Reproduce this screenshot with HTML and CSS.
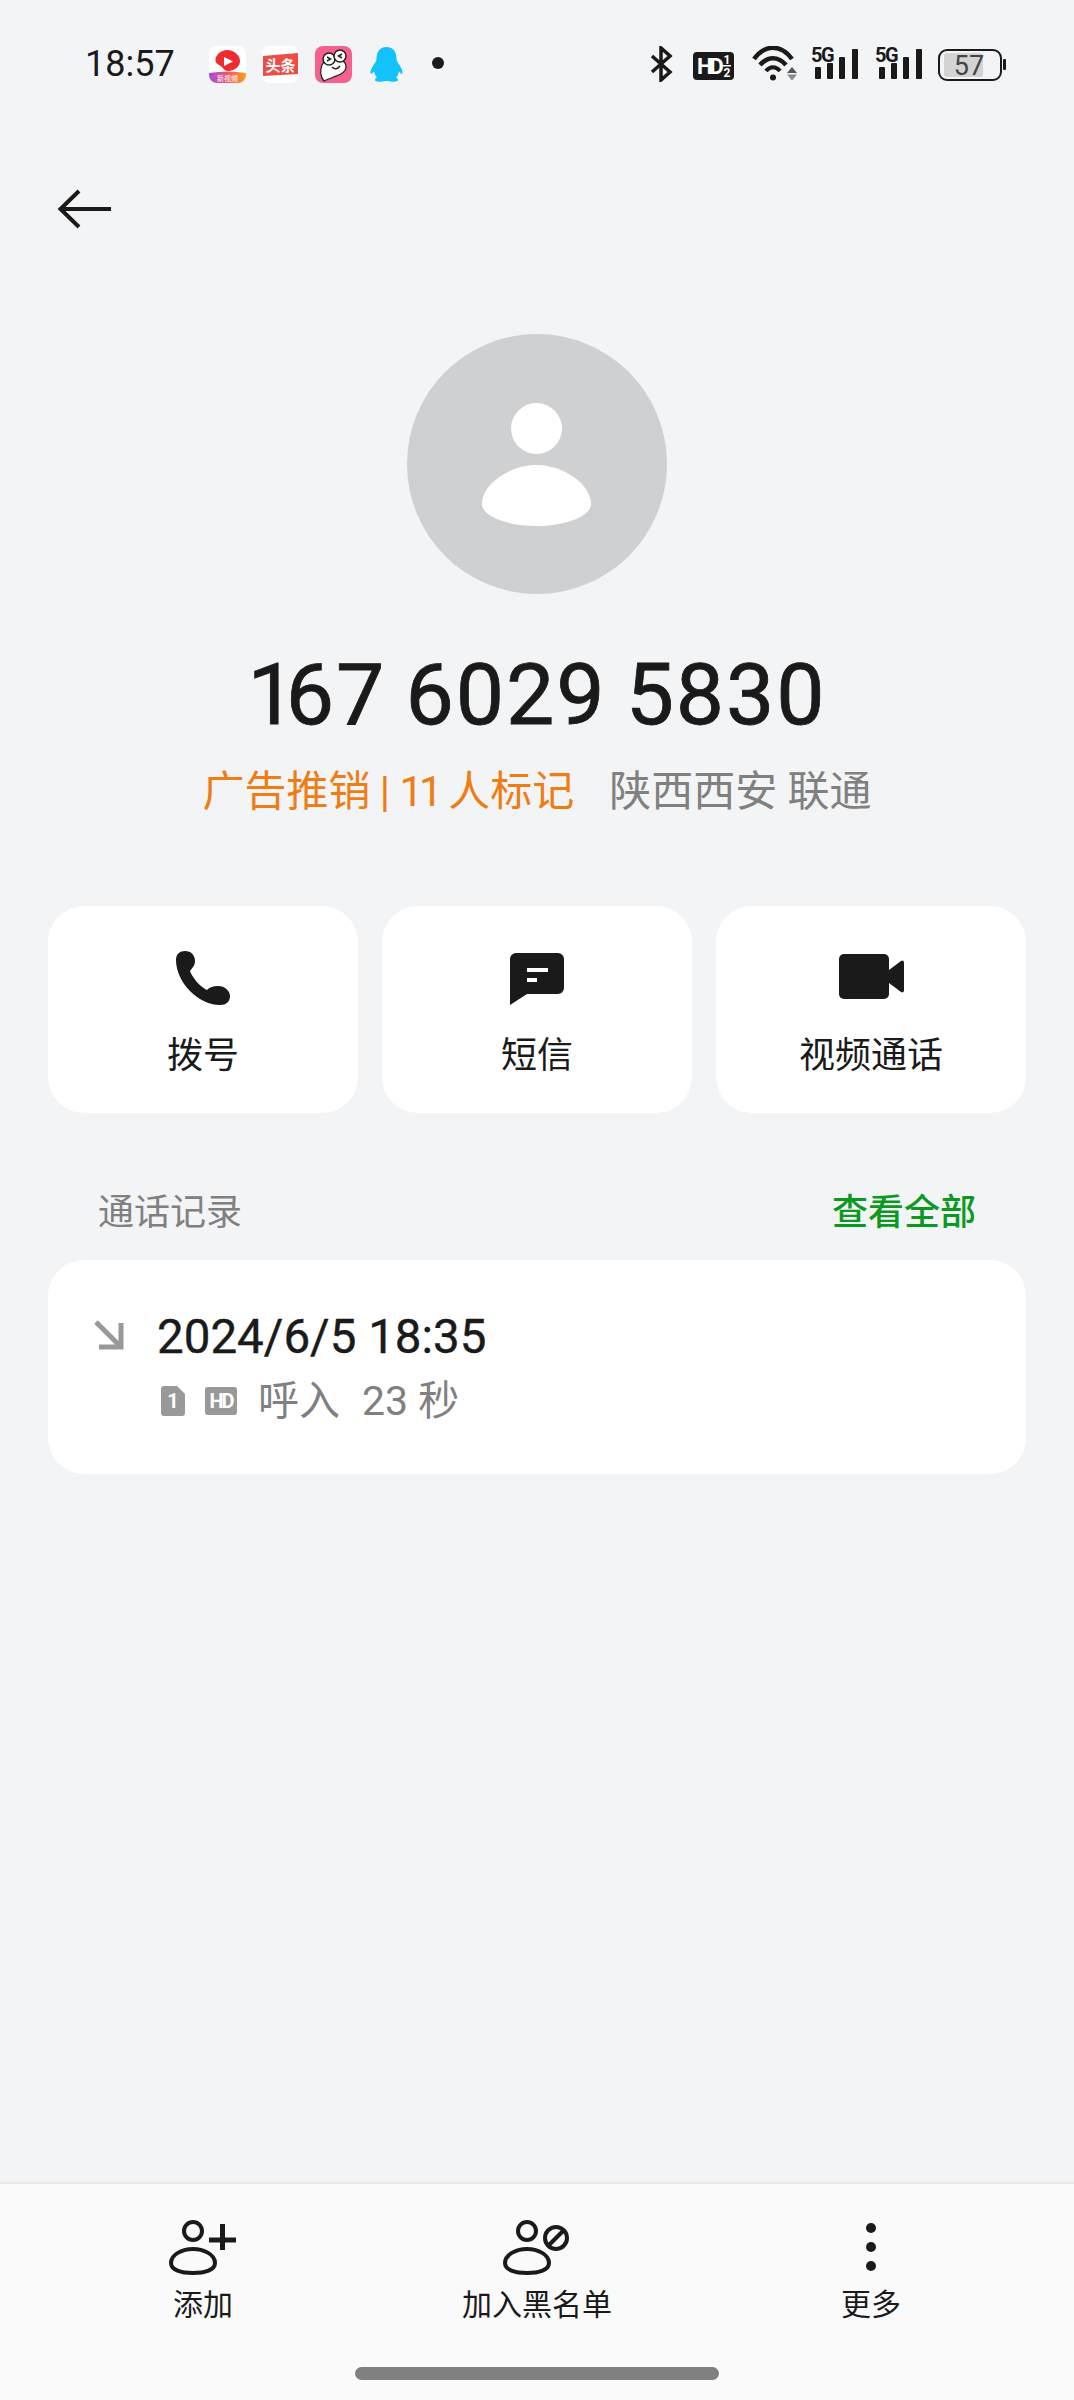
FILE: index.html
```html
<!DOCTYPE html>
<html lang="zh-CN">
<head>
  <meta charset="UTF-8" />
  <meta name="viewport" content="width=device-width, initial-scale=1.0"/>
  <title>通话详情</title>
  <link rel="stylesheet" href="styles.css">
</head>

<body>
  <div class="screen">
    <div class="status">
      <div class="status-left">
        <span class="time">18:57</span>
        <svg class="app" viewBox="0 0 37 37">
          <defs>
            <linearGradient id="band" x1="0" x2="1" y1="0" y2="0">
              <stop offset="0" stop-color="#a14de0"/>
              <stop offset="0.5" stop-color="#f0566a"/>
              <stop offset="1" stop-color="#f9a21f"/>
            </linearGradient>
          </defs>
          <rect width="37" height="37" rx="8" fill="#fff"/>
          <path d="M0 27 Q18 24 37 27 V29 A8 8 0 0 1 29 37 H8 A8 8 0 0 1 0 29 Z" fill="url(#band)"/>
          <path d="M18 4 C26 4 31 10 31 15 C31 20 27 24 20 25 C17 25.500 15 24 13 21 C11 19 7 18 6.500 15 C6 9 12 4 18 4 Z" fill="#ee2b2f"/>
          <path d="M15 11 L24 15.500 L15 20 Z" fill="#fff"/>
          <text x="18.500" y="34.500" class="app-tiny">新视频</text>
        </svg>
        <svg class="app" viewBox="0 0 37 37">
          <rect width="37" height="37" rx="8" fill="#fff"/>
          <path d="M1 10 L36 7 V28 L1 30 Z" fill="#ee4c44"/>
          <text x="18.500" y="25" class="app-label">头条</text>
        </svg>
        <svg class="app" viewBox="0 0 37 37">
          <rect width="37" height="37" rx="8" fill="#f6608f"/>
          <path d="M7 19 C9 14 14 13 20 13 C27 13 31 16 31 21 C31 28 20 30 9 35 C5 31 5 24 7 19 Z" fill="#fff" stroke="#222" stroke-width="1.200"/>
          <circle cx="14" cy="13" r="6" fill="#fff" stroke="#222" stroke-width="1.500"/>
          <circle cx="25" cy="10" r="6" fill="#fff" stroke="#222" stroke-width="1.500"/>
          <path d="M12 11 L15.500 13 L12 15 M27 8 L23.500 10 L27 12" fill="none" stroke="#222" stroke-width="1.500"/>
          <path d="M17 21 Q21 25 25 20" fill="none" stroke="#222" stroke-width="1.500"/>
        </svg>
        <svg class="app" viewBox="0 0 37 37">
          <path d="M18.500 1 C26 1 28.500 7 28.500 13 C28.500 15 30 17 31.500 19 C33.500 22 35 26 34.500 27.500 C33.500 28 32 27 31 25.500 C30.500 28 29.500 30 28 31.500 C30 32.500 30.500 34 29.500 35 C27 36.500 22 35.500 19.500 35 H17.500 C15 35.500 10 36.500 7.500 35 C6.500 34 7 32.500 9 31.500 C7.500 30 6.500 28 6 25.500 C5 27 3.500 28 2.500 27.500 C2 26 3.500 22 5.500 19 C7 17 8.500 15 8.500 13 C8.500 7 11 1 18.500 1 Z" fill="#12c3fb"/>
        </svg>
        <span class="dot"></span>
      </div>
      <div class="status-right">
        <svg class="ic-bt" viewBox="0 0 25 36">
          <path d="M2 10 L20 26 L11 34 V2 L20 10 L2 26" fill="none" stroke="#1a1a1a" stroke-width="3.500"/>
        </svg>
        <svg class="ic-hd" viewBox="0 0 46 36">
          <rect x="5" y="6" width="41" height="28" rx="4" fill="#1a1a1a"/>
          <text x="9" y="28" class="hd-big">HD</text>
          <text x="39" y="18" class="hd-small">1</text>
          <text x="39" y="31" class="hd-small">2</text>
          <rect x="35" y="19" width="8" height="1.500" fill="#fff"/>
        </svg>
        <svg class="ic-wifi" viewBox="0 0 51 36">
          <path d="M7 13 C18 -2 34 -2 45 13" fill="none" stroke="#1a1a1a" stroke-width="4.500"/>
          <path d="M13 19 C21 10 31 10 39 19" fill="none" stroke="#1a1a1a" stroke-width="4.500"/>
          <path d="M19 25 C23 20 29 20 33 25" fill="none" stroke="#1a1a1a" stroke-width="4"/>
          <circle cx="26" cy="31.500" r="3" fill="#1a1a1a"/>
          <path d="M40 27 L45 21 L50 27 Z" fill="#555"/>
          <path d="M40 28.500 H50 L45 34.500 Z" fill="#888"/>
        </svg>
        <svg class="ic-sig" viewBox="0 0 47 36">
          <text x="0" y="16" class="sig-text">5G</text>
          <rect x="4" y="21" width="6" height="12" rx="1" fill="#1a1a1a"/>
          <rect x="16" y="17" width="6" height="16" rx="1" fill="#1a1a1a"/>
          <rect x="28" y="11" width="6" height="22" rx="1" fill="#1a1a1a"/>
          <rect x="41" y="3" width="6" height="30" rx="1" fill="#1a1a1a"/>
        </svg>
        <svg class="ic-sig2" viewBox="0 0 51 36">
          <text x="4" y="16" class="sig-text">5G</text>
          <rect x="8" y="21" width="6" height="12" rx="1" fill="#1a1a1a"/>
          <rect x="20" y="17" width="6" height="16" rx="1" fill="#1a1a1a"/>
          <rect x="32" y="11" width="6" height="22" rx="1" fill="#1a1a1a"/>
          <rect x="45" y="3" width="6" height="30" rx="1" fill="#1a1a1a"/>
        </svg>
        <svg class="ic-bat" viewBox="0 0 71 36">
          <rect x="4" y="4" width="62" height="30" rx="8" fill="none" stroke="#1a1a1a" stroke-width="2"/>
          <rect x="9" y="7" width="39" height="24" rx="3" fill="#d3d3d3"/>
          <rect x="68" y="13" width="3" height="11" rx="1" fill="#1a1a1a"/>
          <text x="34" y="29" class="bat-text">57</text>
        </svg>
      </div>
    </div>

    <div class="topbar">
      <svg class="back" viewBox="0 0 56 42">
        <path d="M54 21 H4 M22 3 L3.500 21 L22 39" fill="none" stroke="#1a1a1a" stroke-width="4"/>
      </svg>
    </div>

    <div class="contact">
      <div class="avatar">
        <svg viewBox="1 0 260 260" width="260" height="260">
          <circle cx="130.500" cy="94.500" r="25.500" fill="#fff"/>
          <path d="M76 170 C76 150 104 131 130.500 131 C157 131 185 150 185 170 C185 182 160 192 130.500 192 C101 192 76 182 76 170 Z" fill="#fff"/>
        </svg>
      </div>
      <h1 class="number"><span class="one">1</span>67 6029 5830</h1>
      <p class="meta"><span class="tag">广告推销 | <span class="eleven">11</span> 人标记</span><span class="place">陕西西安 联通</span></p>
    </div>

    <div class="actions">
      <div class="action">
        <svg class="action-icon" viewBox="3 -2 80 80">
          <path d="M16 20 C16 14 20 11 25 11 C31 11 35 15 35 21 C35 26 32 28 30 31 C32 37 40 47 47 50 C50 47 53 46 58 46 C65 46 70 51 70 56 C70 62 66 65 60 65 C38 65 16 42 16 20 Z" fill="#1a1a1a"/>
        </svg>
        <span>拨号</span>
      </div>
      <div class="action">
        <svg class="action-icon" viewBox="6 -1 80 80">
          <path d="M19 20 A6 6 0 0 1 25 14 H67 A6 6 0 0 1 73 20 V49 A6 6 0 0 1 67 55 H36 L19 66 Z" fill="#1a1a1a"/>
          <rect x="36" y="29" width="21" height="4" fill="#fff"/>
          <rect x="36" y="39" width="10" height="4" fill="#fff"/>
        </svg>
        <span>短信</span>
      </div>
      <div class="action">
        <svg class="action-icon" viewBox="-1 0 80 80">
          <rect x="7" y="16" width="50" height="45" rx="5" fill="#1a1a1a"/>
          <path d="M57 32 L69 23 Q72 21.500 72 25 V52 Q72 55.500 69 54 L57 45 Z" fill="#1a1a1a"/>
        </svg>
        <span>视频通话</span>
      </div>
    </div>

    <div class="section-head">
      <span class="section-title">通话记录</span>
      <span class="section-link">查看全部</span>
    </div>

    <div class="call">
      <svg class="call-arrow" viewBox="0 0 34 34">
        <path d="M4 3 L27 26 M29 4 V28 H7" fill="none" stroke="#999" stroke-width="5"/>
      </svg>
      <div class="call-info">
        <div class="call-date">2024/6/5 18:35</div>
        <div class="call-sub">
          <svg class="sim" viewBox="0 0 24 30">
            <path d="M3 0 H16 L24 8 V27 A3 3 0 0 1 21 30 H3 A3 3 0 0 1 0 27 V3 A3 3 0 0 1 3 0 Z" fill="#999"/>
            <text x="12" y="22" class="badge-text">1</text>
          </svg>
          <svg class="hd" viewBox="0 0 32 28">
            <rect width="32" height="28" rx="3" fill="#999"/>
            <text x="16" y="21" class="badge-text badge-hd">HD</text>
          </svg>
          <span class="call-text">呼入</span>
          <span class="call-text">23 秒</span>
        </div>
      </div>
    </div>

    <div class="bottom">
      <div class="tabs">
        <div class="tab">
          <svg class="tab-icon" viewBox="-1 0 90 60">
            <circle cx="34" cy="15" r="9" fill="none" stroke="#1a1a1a" stroke-width="4"/>
            <path d="M12 47 C12 38 24 33 34 33 C44 33 56 38 56 47 C56 54 46 57 34 57 C22 57 12 54 12 47 Z" fill="none" stroke="#1a1a1a" stroke-width="4"/>
            <path d="M50 24 H77 M63.500 8 V34" fill="none" stroke="#1a1a1a" stroke-width="5"/>
          </svg>
          <span>添加</span>
        </div>
        <div class="tab">
          <svg class="tab-icon" viewBox="-2 0 90 60">
            <circle cx="33" cy="15" r="9" fill="none" stroke="#1a1a1a" stroke-width="4"/>
            <path d="M11 47 C11 38 23 33 33 33 C43 33 55 38 55 47 C55 54 45 57 33 57 C21 57 11 54 11 47 Z" fill="none" stroke="#1a1a1a" stroke-width="4"/>
            <circle cx="62" cy="22" r="11" fill="none" stroke="#1a1a1a" stroke-width="4"/>
            <path d="M54 30 L70 14" fill="none" stroke="#1a1a1a" stroke-width="4"/>
          </svg>
          <span>加入黑名单</span>
        </div>
        <div class="tab">
          <svg class="tab-icon" viewBox="0 0 90 60">
            <circle cx="45" cy="12" r="5" fill="#1a1a1a"/>
            <circle cx="45" cy="31" r="5" fill="#1a1a1a"/>
            <circle cx="45" cy="50" r="5" fill="#1a1a1a"/>
          </svg>
          <span>更多</span>
        </div>
      </div>
      <div class="home-bar"></div>
    </div>
  </div>
</body>
</html>
```

FILE: styles.css
```css
* {
  margin: 0;
  padding: 0;
  box-sizing: border-box;
  font-family: Roboto, "Noto Sans CJK SC", sans-serif;
}

body {
  background: #f3f4f6;
  color: #1a1a1a;
}

.screen {
  width: 1074px;
  height: 2400px;
  display: flex;
  flex-direction: column;
}

/* status bar */
.status {
  display: flex;
  justify-content: space-between;
  padding: 46px 68px 0 85px;
  height: 82px;
}

.status-left,
.status-right {
  display: flex;
  align-items: flex-start;
}

.status-right {
  gap: 13px;
}

.status-left svg {
  display: block;
}

.time {
  font-size: 36px;
  line-height: 36px;
  width: 124px;
}

.app {
  width: 37px;
  height: 37px;
  margin-right: 16px;
}

.app-label {
  font-size: 15px;
  font-weight: 700;
  fill: #fff;
  text-anchor: middle;
}

.app-tiny {
  font-size: 7px;
  fill: #fff;
  text-anchor: middle;
}

.dot {
  width: 12px;
  height: 12px;
  border-radius: 50%;
  background: #1a1a1a;
  margin: 11px 0 0 11px;
}

.ic-bt { width: 25px; height: 36px; }
.ic-hd { width: 46px; height: 36px; }
.ic-wifi { width: 51px; height: 36px; }
.ic-sig { width: 47px; height: 36px; }
.ic-sig2 { width: 51px; height: 36px; }
.ic-bat { width: 71px; height: 36px; }

.hd-big {
  font-size: 22px;
  font-weight: 700;
  fill: #fff;
  letter-spacing: -3px;
}

.hd-small {
  font-size: 12px;
  font-weight: 700;
  fill: #fff;
  text-anchor: middle;
}

.sig-text {
  font-size: 20px;
  font-weight: 700;
  fill: #1a1a1a;
  letter-spacing: -1.500px;
}

.bat-text {
  font-size: 27px;
  fill: #444;
  text-anchor: middle;
}

/* back arrow */
.topbar {
  padding: 106px 0 0 57px;
  height: 148px;
}

.back {
  display: block;
  width: 56px;
  height: 42px;
}

/* contact */
.contact {
  display: flex;
  flex-direction: column;
  align-items: center;
}

.avatar {
  width: 260px;
  height: 260px;
  border-radius: 50%;
  background: #cfd0d2;
  margin-top: 104px;
}

.avatar svg {
  display: block;
}

.number {
  font-size: 86px;
  font-weight: 400;
  line-height: 100px;
  margin-top: 51px;
  letter-spacing: 1.900px;
  word-spacing: -4px;
  -webkit-text-stroke: 0.800px #1a1a1a;
}

/* the 1 is narrower than the other digits in the phone's font */
.one {
  letter-spacing: -10px;
}

.meta {
  font-size: 42px;
  line-height: 56px;
  margin-top: 19px;
  display: flex;
  gap: 35px;
}

.tag {
  color: #f07d14;
  word-spacing: -1px;
}

.eleven {
  letter-spacing: -4px;
}

.place {
  color: #808080;
}

/* action cards */
.actions {
  display: grid;
  grid-template-columns: repeat(3, 1fr);
  gap: 24px;
  padding: 0 48px;
  margin-top: 86px;
}

.action {
  background: white;
  border-radius: 36px;
  height: 207px;
  display: flex;
  flex-direction: column;
  align-items: center;
  padding-top: 32px;
  font-size: 36px;
  line-height: 48px;
}

.action-icon {
  width: 80px;
  height: 80px;
  margin-bottom: 14px;
}

/* call history */
.section-head {
  display: flex;
  justify-content: space-between;
  padding: 0 98px;
  margin-top: 75px;
  font-size: 36px;
  line-height: 50px;
}

.section-title {
  color: #808080;
}

.section-link {
  color: #0b9a1f;
  font-weight: 500;
}

.call {
  background: white;
  border-radius: 36px;
  margin: 22px 48px 0;
  height: 214px;
  display: flex;
  padding: 59px 0 0 44px;
  gap: 32px;
}

.call-arrow {
  width: 34px;
  height: 34px;
}

.call-date {
  font-size: 47.500px;
  line-height: 56px;
  margin-top: -10px;
  margin-left: -1px;
  -webkit-text-stroke: 0.400px #1a1a1a;
}

.call-sub {
  display: flex;
  align-items: center;
  margin-top: 11px;
  margin-left: 3px;
}

.sim {
  width: 24px;
  height: 30px;
  margin-right: 20px;
}

.hd {
  width: 32px;
  height: 28px;
  margin-right: 21px;
}

.badge-text {
  font-size: 20px;
  font-weight: 700;
  fill: #fff;
  text-anchor: middle;
}

.badge-hd {
  letter-spacing: -2px;
}

.call-text {
  font-size: 41px;
  line-height: 50px;
  color: #808080;
  margin-right: 22px;
}

/* bottom bar */
.bottom {
  margin-top: auto;
  height: 218px;
  background: #fafafa;
  border-top: 2px solid #e8e8e8;
  display: flex;
  flex-direction: column;
  align-items: center;
}

.tabs {
  width: 100%;
  display: grid;
  grid-template-columns: repeat(3, 1fr);
  gap: 24px;
  padding: 0 48px;
}

.tab {
  display: flex;
  flex-direction: column;
  align-items: center;
  padding-top: 32px;
  font-size: 30px;
  line-height: 40px;
}

.tab-icon {
  width: 90px;
  height: 60px;
  margin-bottom: 9px;
}

.home-bar {
  width: 364px;
  height: 13px;
  border-radius: 7px;
  background: #808080;
  margin-top: 42px;
}
```
